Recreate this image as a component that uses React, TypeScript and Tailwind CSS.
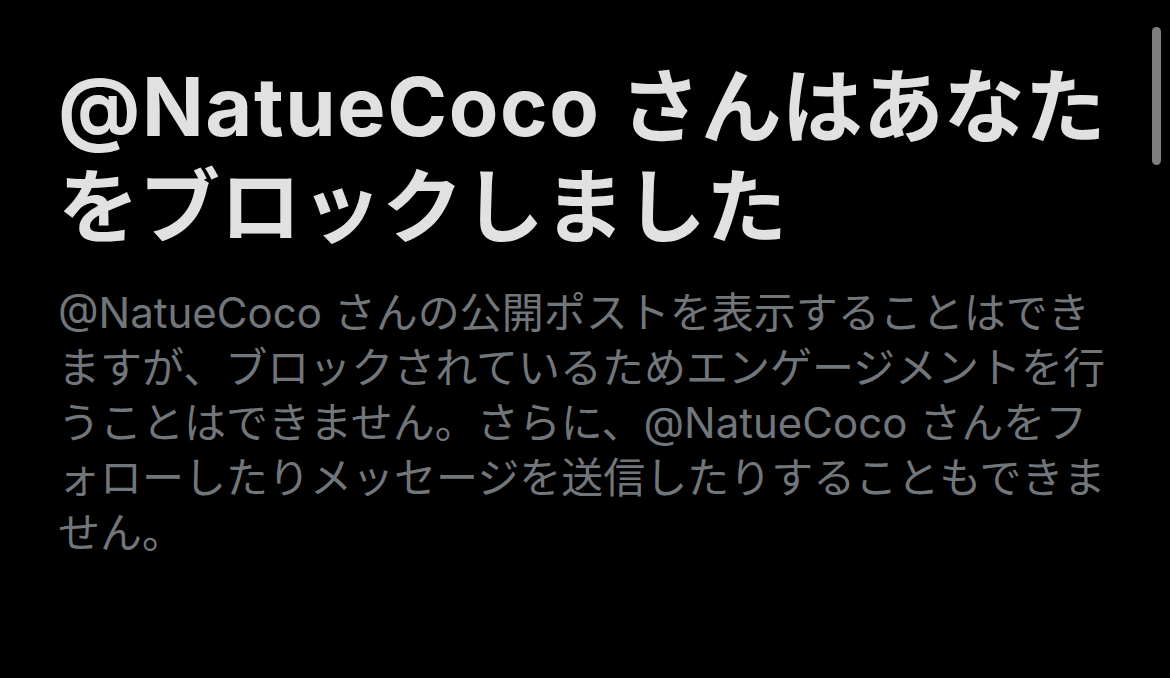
export default function App() {
  return (
    <div className="relative h-[678px] w-[1170px] overflow-hidden bg-black">
      <div
        className="w-[1060px] pl-[58px] pt-[57px]"
        style={{ boxSizing: "content-box" }}
      >
        <h1 className="font-['Inter','Noto_Sans_CJK_JP',sans-serif] text-[81px] leading-[100px] font-bold text-[#e1e1e1]">
          <span className="tracking-[0.02em]">@NatueCoco</span> さんはあなたをブロックしました
        </h1>
        <p className="mt-[28px] font-['Inter','Noto_Sans_CJK_JP',sans-serif] text-[42px] leading-[55px] text-[#71767b]">
          @NatueCoco
          さんの公開ポストを表示することはできますが、ブロックされているためエンゲージメントを行うことはできません。さらに、@NatueCoco
          さんをフォローしたりメッセージを送信したりすることもできません。
        </p>
      </div>

      {/* scroll indicator */}
      <div className="absolute top-[27px] left-[1152px] h-[138px] w-[9px] rounded-full bg-[#7f7f7f]" />
    </div>
  );
}
